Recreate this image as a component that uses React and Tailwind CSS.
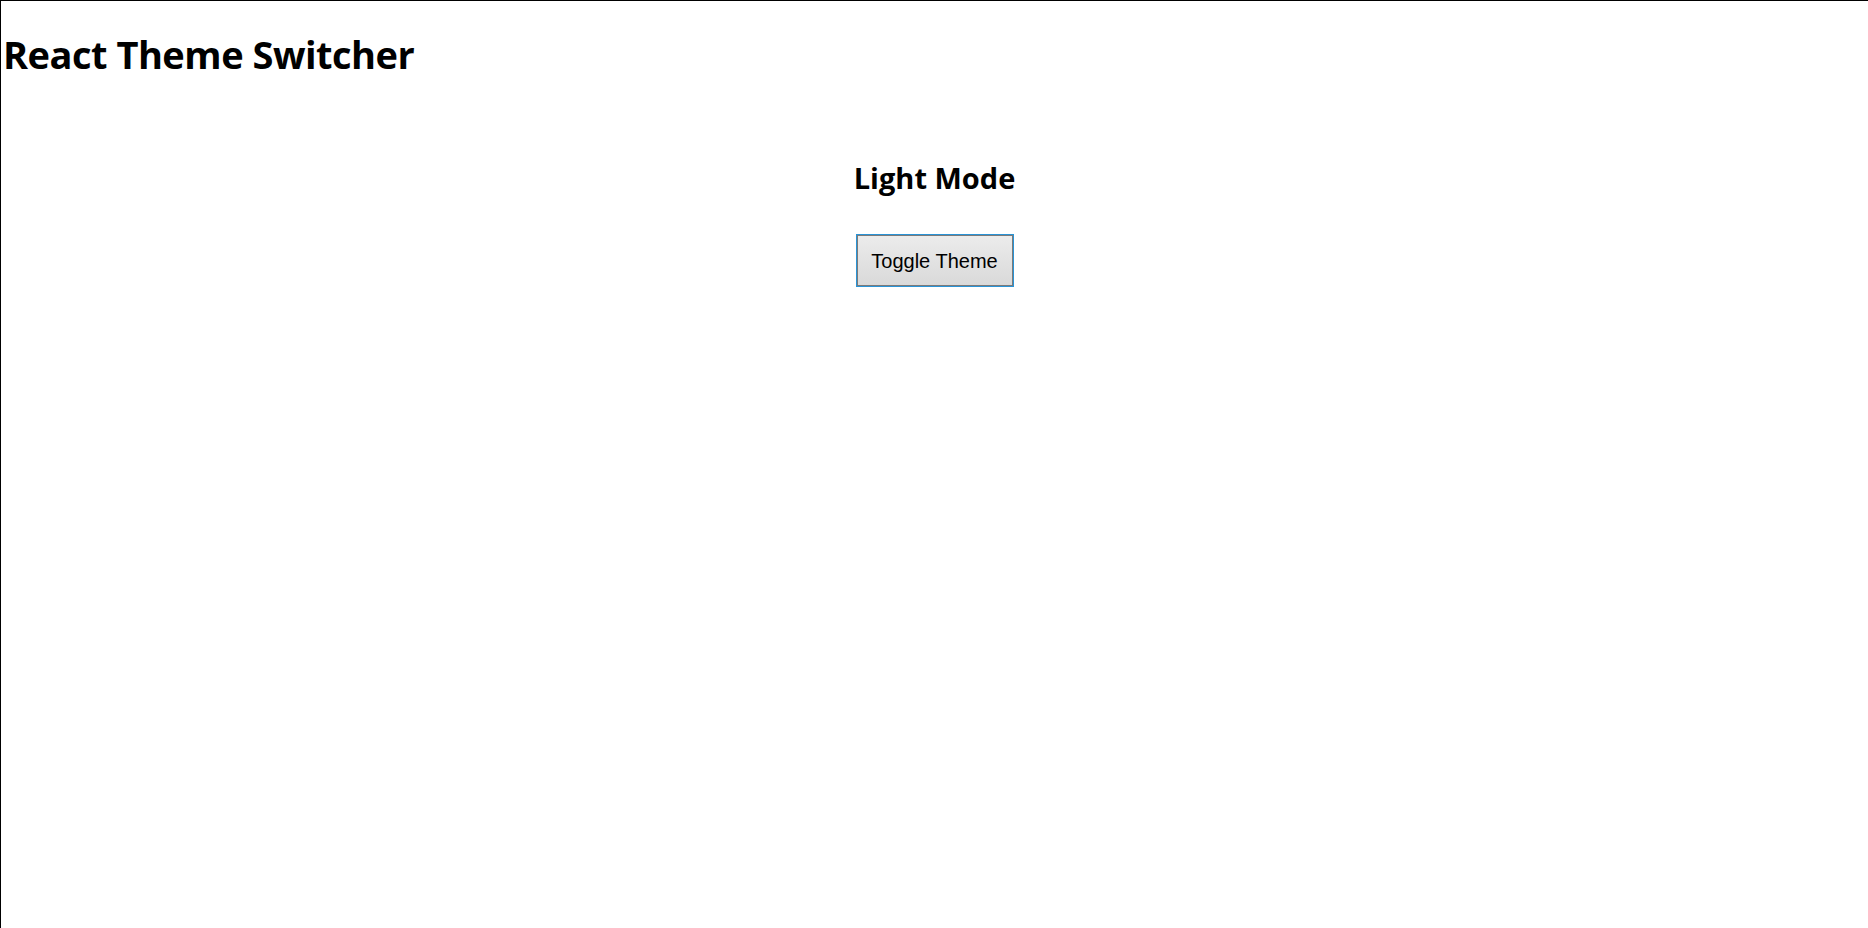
import React, { useState } from 'react'

const App = () => {
  const [dark, setDark] = useState(false)

  return (
    <div className="min-h-screen border-t border-l border-black bg-white text-black">
      <h1 className="mt-[34px] pl-[2px] text-[38px] font-bold leading-none tracking-[-0.5px]" style={{ fontFamily: '"Open Sans", "Noto Sans", sans-serif' }}>
        React Theme Switcher
      </h1>

      <div className="flex flex-col items-center">
        <h2 className="mt-[90px] text-[29px] font-bold leading-none" style={{ fontFamily: '"Open Sans", "Noto Sans", sans-serif' }}>
          {dark ? 'Dark Mode' : 'Light Mode'}
        </h2>
        <button
          onClick={() => setDark(!dark)}
          className="mt-[42px] h-[53px] w-[158px] border border-[#2a93d5] bg-gradient-to-b from-[#ececec] to-[#d9d9d9] text-[20px] text-black shadow-[inset_0_0_0_1px_#7a7a7a] font-['Liberation_Sans',Arial,sans-serif]"
        >
          Toggle Theme
        </button>
      </div>
    </div>
  )
}

export default App
